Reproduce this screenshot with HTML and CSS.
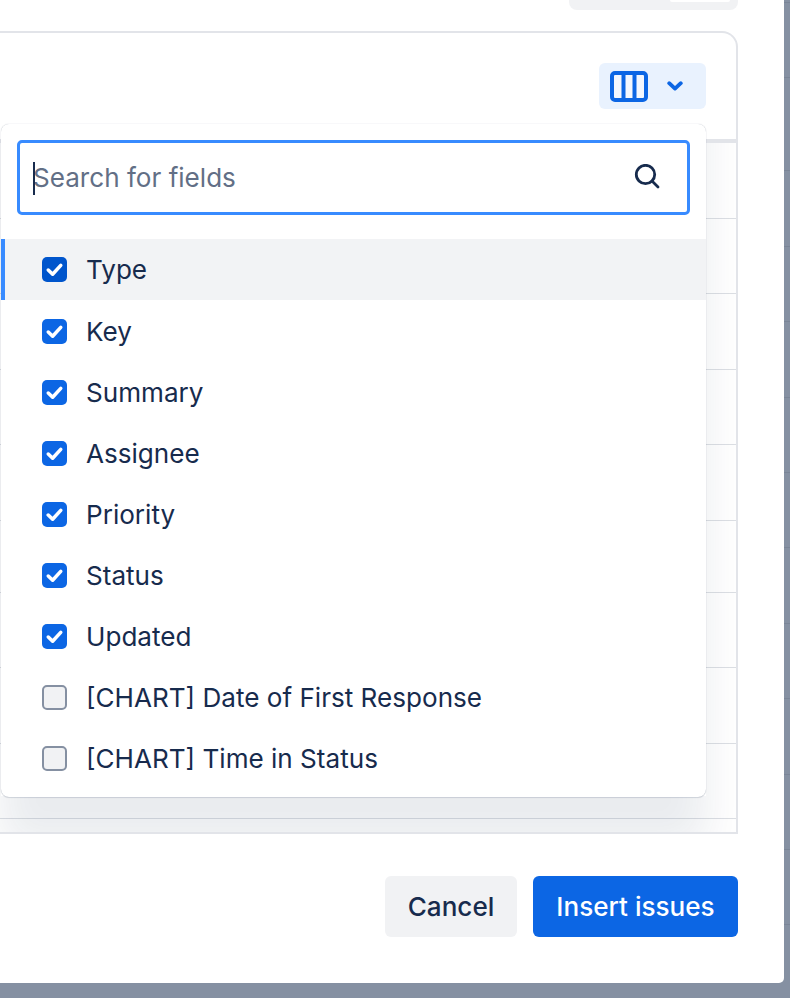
FILE: index.html
```html
<!DOCTYPE html>
<html lang="en">
<head>
<meta charset="utf-8">
<title>Insert issues</title>
<link rel="stylesheet" href="styles.css">
</head>
<body>
<div class="modal">
  <div class="top-tab"><span class="top-tab-inner"></span></div>
  <section class="card">
    <div class="card-head">
      <button class="columns-btn" aria-label="Columns">
        <svg class="columns-icon" viewBox="0 0 38 31" width="38" height="31"><rect x="2" y="2" width="34" height="27" rx="3" fill="#f3f7fe" stroke="#0c66e4" stroke-width="4"/><path d="M13.5 2v27M24.5 2v27" stroke="#0c66e4" stroke-width="4"/></svg>
        <svg class="chev" viewBox="0 0 16 10" width="16" height="10"><path d="M2.2 2.2L8 7.6l5.8-5.4" fill="none" stroke="#0c66e4" stroke-width="3.8" stroke-linecap="round" stroke-linejoin="round"/></svg>
      </button>
    </div>
    <div class="rows">
      <div class="row"></div><div class="row"></div><div class="row"></div><div class="row"></div><div class="row"></div><div class="row short"></div><div class="row"></div><div class="row"></div><div class="row"></div>
      <div class="row tail"></div>
    </div>
    <div class="popover">
      <div class="search">
        <span class="caret"></span>
        <span class="placeholder">Search for fields</span>
        <svg class="search-icon" viewBox="0 0 28 28" width="28" height="28"><circle cx="12.5" cy="10.5" r="9.2" fill="none" stroke="#172b4d" stroke-width="2.8"/><path d="M19 17l6 6" stroke="#172b4d" stroke-width="2.8" stroke-linecap="round"/></svg>
      </div>
      <ul class="options">
        <li class="option active"><span class="box on dark"><svg viewBox="0 0 24 24"><path d="M6 12.5l4.2 4L18 8" fill="none" stroke="#fff" stroke-width="3.4" stroke-linecap="round" stroke-linejoin="round"/></svg></span>Type</li>
        <li class="option"><span class="box on"><svg viewBox="0 0 24 24"><path d="M6 12.5l4.2 4L18 8" fill="none" stroke="#fff" stroke-width="3.4" stroke-linecap="round" stroke-linejoin="round"/></svg></span>Key</li>
        <li class="option"><span class="box on"><svg viewBox="0 0 24 24"><path d="M6 12.5l4.2 4L18 8" fill="none" stroke="#fff" stroke-width="3.4" stroke-linecap="round" stroke-linejoin="round"/></svg></span>Summary</li>
        <li class="option"><span class="box on"><svg viewBox="0 0 24 24"><path d="M6 12.5l4.2 4L18 8" fill="none" stroke="#fff" stroke-width="3.4" stroke-linecap="round" stroke-linejoin="round"/></svg></span>Assignee</li>
        <li class="option"><span class="box on"><svg viewBox="0 0 24 24"><path d="M6 12.5l4.2 4L18 8" fill="none" stroke="#fff" stroke-width="3.4" stroke-linecap="round" stroke-linejoin="round"/></svg></span>Priority</li>
        <li class="option"><span class="box on"><svg viewBox="0 0 24 24"><path d="M6 12.5l4.2 4L18 8" fill="none" stroke="#fff" stroke-width="3.4" stroke-linecap="round" stroke-linejoin="round"/></svg></span>Status</li>
        <li class="option"><span class="box on"><svg viewBox="0 0 24 24"><path d="M6 12.5l4.2 4L18 8" fill="none" stroke="#fff" stroke-width="3.4" stroke-linecap="round" stroke-linejoin="round"/></svg></span>Updated</li>
        <li class="option"><span class="box"></span>[CHART] Date of First Response</li>
        <li class="option"><span class="box"></span>[CHART] Time in Status</li>
      </ul>
    </div>
  </section>
  <footer class="actions">
    <button class="btn btn-subtle">Cancel</button>
    <button class="btn btn-primary">Insert issues</button>
  </footer>
</div>
</body>
</html>
```
FILE: styles.css
```css
* { box-sizing: border-box; }
html, body { margin: 0; height: 100%; }
body {
  width: 790px;
  height: 998px;
  overflow: hidden;
  font-family: Inter, "Liberation Sans", sans-serif;
  color: #172b4d;
  background-color: #8590a2;
  background-image: repeating-linear-gradient(to bottom, transparent 0, transparent 74.4px, #7a8597 74.4px, #7a8597 75.4px);
  background-position: 0 96px;
}
.modal {
  width: 784px;
  height: 983px;
  background: #fff;
  border-radius: 0 0 5px 0;
  display: flex;
  flex-direction: column;
  align-items: flex-end;
  padding-right: 46px;
}
.top-tab {
  width: 169px;
  height: 10px;
  flex: none;
  background: #f1f2f4;
  border-radius: 0 0 8px 8px;
  display: flex;
  justify-content: flex-end;
  padding-right: 8px;
}
.top-tab-inner {
  width: 60px;
  height: 2px;
  background: #fff;
  border-radius: 0 0 6px 6px;
}
.card {
  position: relative;
  width: 740px;
  height: 803px;
  flex: none;
  margin-top: 21px;
  border: 2px solid #e2e4e9;
  border-left: 0;
  border-radius: 0 16px 0 0;
  display: flex;
  flex-direction: column;
}
.card-head {
  height: 110px;
  flex: none;
  border-bottom: 4px solid #e2e4e9;
  display: flex;
  justify-content: flex-end;
  padding: 30px 30px 0 0;
}
.columns-btn {
  width: 107px;
  height: 46px;
  border: 0;
  padding: 0 23px 0 11px;
  background: #e9f2fe;
  border-radius: 6px;
  display: flex;
  align-items: center;
  justify-content: space-between;
}
.columns-icon, .chev { display: block; }
.rows {
  position: relative;
  flex: 1;
  overflow: hidden;
  display: flex;
  flex-direction: column;
}
.rows::after {
  content: "";
  position: absolute;
  left: 3px;
  top: -100px;
  width: 705px;
  height: 753px;
  box-shadow: 0 50px 40px rgba(9,30,66,.085);
}
.row { height: 75.5px; flex: none; border-bottom: 1px solid #dcdfe4; }
.row.short { height: 72px; }
.row.tail { height: 14px; border-bottom: 0; }
.actions {
  display: flex;
  gap: 16px;
  margin-top: 42px;
}
.btn {
  height: 61px;
  border: 0;
  border-radius: 6px;
  font: 500 26.1px Inter, "Liberation Sans", sans-serif;
}
.btn-subtle { width: 132px; background: #f1f2f4; color: #172b4d; }
.btn-primary { width: 205px; background: #0c66e4; color: #fff; }
.popover {
  position: absolute;
  left: 3px;
  top: 91px;
  width: 705px;
  height: 673px;
  background: #fff;
  border-radius: 8px;
  box-shadow: 0 1px 1px rgba(9,30,66,.12), 0 0 1px rgba(9,30,66,.3);
  padding: 16px 0 0;
  z-index: 1;
}
.search {
  margin: 0 16px;
  height: 75px;
  border: 3px solid #388bff;
  border-radius: 5px;
  display: flex;
  align-items: center;
  padding-left: 13px;
  position: relative;
}
.caret {
  position: absolute;
  left: 13px;
  top: 19px;
  width: 2px;
  height: 33px;
  background: #172b4d;
}
.placeholder { font-size: 26.1px; color: #626f86; flex: 1; }
.search-icon { margin-right: 26px; }
.options { list-style: none; margin: 24.3px 0 0; padding: 0; }
.option {
  height: 61.15px;
  display: flex;
  align-items: center;
  padding-left: 41px;
  font-size: 26.1px;
  gap: 19px;
}
.option.active {
  background: #f2f3f5;
  box-shadow: inset 4px 0 0 #388bff;
}
.box {
  width: 25px;
  height: 25px;
  flex: none;
  border-radius: 5px;
  background: #f1f2f4;
  border: 2px solid #8590a2;
}
.box.on { background: #0c66e4; border: 0; }
.box.on.dark { background: #0055cc; }
.box svg { display: block; width: 25px; height: 25px; }
```
